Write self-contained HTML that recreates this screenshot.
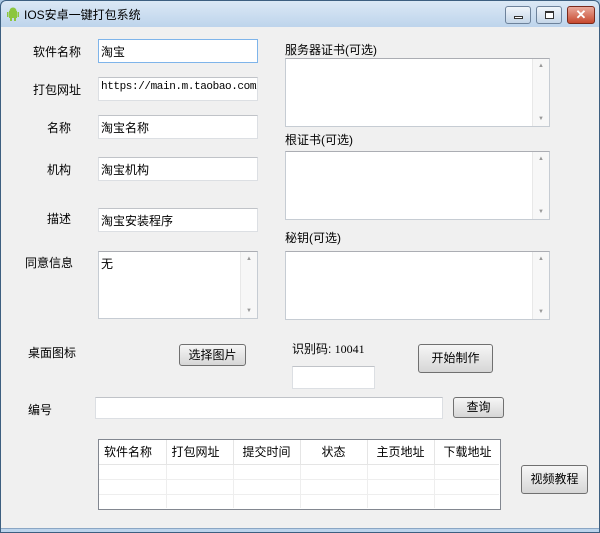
<!DOCTYPE html>
<html><head><meta charset="utf-8"><style>
*{box-sizing:border-box;margin:0;padding:0}
body{width:600px;height:533px;overflow:hidden;font-family:"Liberation Sans","Noto Sans CJK SC",sans-serif;font-size:12px;color:#000;background:#a9c6e2}
.win{position:absolute;left:0;top:0;width:600px;height:533px;border:1px solid #3d5f80;border-radius:6px 6px 0 0;background:linear-gradient(#dbe8f5,#b9d1ea 30px,#bcd4ec)}
.client{position:absolute;left:1px;top:27px;width:598px;height:502px;background:#f0f0f0;border-bottom:1px solid #8aa6c4}
.a{position:absolute}
.lbl{position:absolute;font-size:12px;white-space:nowrap}
.in{position:absolute;background:#fff;border:1px solid #dcdfe3;border-top-color:#c0c3c8;padding:3px 2px;font-size:12px;white-space:nowrap;overflow:hidden}
.ta{position:absolute;background:#fff;border:1px solid #c6ccd3;border-top-color:#abadb3}
.sb{position:absolute;right:0;top:0;bottom:0;width:17px;background:#f7f7f7;border-left:1px solid #e8e8e8}
.sb:before{content:"▲";position:absolute;top:4px;left:5px;font-size:6px;color:#999}
.sb:after{content:"▼";position:absolute;bottom:4px;left:5px;font-size:6px;color:#999}
.btn{position:absolute;border:1px solid #707070;border-radius:3px;background:linear-gradient(#f6f6f6,#e6e6e6 50%,#d6d6d6);font-size:12px;text-align:center}
.tb{position:absolute;width:26px;height:18px;top:5px;border:1px solid #6d829b;border-radius:3px;background:linear-gradient(#f0f5fa,#c5d6e8)}
</style></head><body>
<div class="win">
<div class="a" style="left:6px;top:6px;width:12px;height:14px">
<svg width="12" height="14"><rect x="2" y="4" width="8" height="7" fill="#8cc63f"/><circle cx="6" cy="4" r="3.5" fill="#8cc63f"/><rect x="0" y="5" width="1.5" height="5" fill="#8cc63f"/><rect x="10.5" y="5" width="1.5" height="5" fill="#8cc63f"/><rect x="3" y="11" width="2" height="3" fill="#8cc63f"/><rect x="7" y="11" width="2" height="3" fill="#8cc63f"/></svg></div>
<div class="lbl" style="left:23px;top:5px;font-size:12px">IOS安卓一键打包系统</div>
<div class="tb" style="left:504px"><div class="a" style="left:8px;top:9px;width:9px;height:3px;background:#fff;border:1px solid #333"></div></div>
<div class="tb" style="left:535px"><div class="a" style="left:8px;top:4px;width:9px;height:8px;background:#fff;border:1px solid #333;border-top-width:2px"></div></div>
<div class="tb" style="left:566px;width:28px;background:linear-gradient(#e9a99b,#c7492f);border-color:#7a2a1c;color:#fff;font-weight:bold;text-align:center;line-height:16px;font-size:13px">✕</div>
</div>
<div class="client"></div>

<div class="lbl" style="left:33px;top:43px">软件名称</div>
<div class="in" style="left:98px;top:39px;width:160px;height:24px;border-color:#7eb4ea">淘宝</div>
<div class="lbl" style="left:33px;top:81px">打包网址</div>
<div class="in" style="left:98px;top:77px;width:160px;height:24px;font-family:'Liberation Mono',monospace;font-size:11px;letter-spacing:-0.4px">https://main.m.taobao.com/</div>
<div class="lbl" style="left:47px;top:119px">名称</div>
<div class="in" style="left:98px;top:115px;width:160px;height:24px">淘宝名称</div>
<div class="lbl" style="left:47px;top:161px">机构</div>
<div class="in" style="left:98px;top:157px;width:160px;height:24px">淘宝机构</div>
<div class="lbl" style="left:47px;top:210px">描述</div>
<div class="in" style="left:98px;top:208px;width:160px;height:24px">淘宝安装程序</div>
<div class="lbl" style="left:25px;top:254px">同意信息</div>
<div class="ta" style="left:98px;top:251px;width:160px;height:68px"><div class="lbl" style="left:2px;top:3px">无</div><div class="sb"></div></div>

<div class="lbl" style="left:285px;top:41px">服务器证书(可选)</div>
<div class="ta" style="left:285px;top:58px;width:265px;height:69px"><div class="sb"></div></div>
<div class="lbl" style="left:285px;top:131px">根证书(可选)</div>
<div class="ta" style="left:285px;top:151px;width:265px;height:69px"><div class="sb"></div></div>
<div class="lbl" style="left:285px;top:229px">秘钥(可选)</div>
<div class="ta" style="left:285px;top:251px;width:265px;height:69px"><div class="sb"></div></div>

<div class="lbl" style="left:28px;top:344px">桌面图标</div>
<div class="btn" style="left:179px;top:344px;width:67px;height:22px;line-height:20px">选择图片</div>
<div class="lbl" style="left:292px;top:340px">识别码: <span style="font-family:'Liberation Serif',serif">10041</span></div>
<div class="in" style="left:292px;top:366px;width:83px;height:23px"></div>
<div class="btn" style="left:418px;top:344px;width:75px;height:29px;line-height:27px">开始制作</div>

<div class="lbl" style="left:28px;top:401px">编号</div>
<div class="in" style="left:95px;top:397px;width:348px;height:22px"></div>
<div class="btn" style="left:453px;top:397px;width:51px;height:21px;line-height:19px">查询</div>

<div class="a" style="left:98px;top:439px;width:403px;height:71px;background:#fff;border:1px solid #828790">
<table style="border-collapse:collapse;width:400px;font-size:12px;font-family:'Liberation Sans','Noto Sans CJK SC',sans-serif">
<tr style="height:24px;background:#fff">
<td style="width:67px;border-right:1px solid #e5e5e5;border-bottom:1px solid #e5e5e5;padding-left:5px">软件名称</td>
<td style="width:67px;border-right:1px solid #e5e5e5;border-bottom:1px solid #e5e5e5;padding-left:5px">打包网址</td>
<td style="width:67px;border-right:1px solid #e5e5e5;border-bottom:1px solid #e5e5e5;padding-left:9px">提交时间</td>
<td style="width:67px;border-right:1px solid #e5e5e5;border-bottom:1px solid #e5e5e5;text-align:center">状态</td>
<td style="width:67px;border-right:1px solid #e5e5e5;border-bottom:1px solid #e5e5e5;padding-left:9px">主页地址</td>
<td style="width:65px;border-bottom:1px solid #e5e5e5;padding-left:9px">下载地址</td></tr>
<tr style="height:15px"><td style="border-right:1px solid #eee;border-bottom:1px solid #eee"></td><td style="border-right:1px solid #eee;border-bottom:1px solid #eee"></td><td style="border-right:1px solid #eee;border-bottom:1px solid #eee"></td><td style="border-right:1px solid #eee;border-bottom:1px solid #eee"></td><td style="border-right:1px solid #eee;border-bottom:1px solid #eee"></td><td style="border-bottom:1px solid #eee"></td></tr>
<tr style="height:15px"><td style="border-right:1px solid #eee;border-bottom:1px solid #eee"></td><td style="border-right:1px solid #eee;border-bottom:1px solid #eee"></td><td style="border-right:1px solid #eee;border-bottom:1px solid #eee"></td><td style="border-right:1px solid #eee;border-bottom:1px solid #eee"></td><td style="border-right:1px solid #eee;border-bottom:1px solid #eee"></td><td style="border-bottom:1px solid #eee"></td></tr>
<tr style="height:14px"><td style="border-right:1px solid #eee"></td><td style="border-right:1px solid #eee"></td><td style="border-right:1px solid #eee"></td><td style="border-right:1px solid #eee"></td><td style="border-right:1px solid #eee"></td><td></td></tr>
</table></div>
<div class="btn" style="left:521px;top:465px;width:67px;height:29px;line-height:27px">视频教程</div>
</body></html>
